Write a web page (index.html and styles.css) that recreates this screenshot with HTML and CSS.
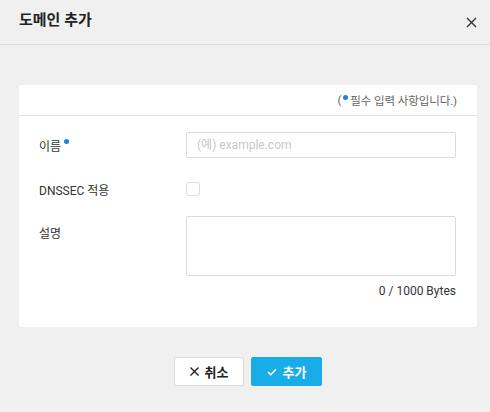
FILE: index.html
```html
<!DOCTYPE html>
<html lang="ko">
<head>
<meta charset="utf-8">
<link rel="stylesheet" href="styles.css">
</head>
<body>
<div class="dialog">
  <div class="dlg-header">
    <h1 class="dlg-title">도메인 추가</h1>
    <button class="dlg-close" aria-label="닫기">
      <svg width="11" height="11" viewBox="0 0 11 11"><path d="M1 1L10 10M10 1L1 10" stroke="#333" stroke-width="1.4" fill="none"/></svg>
    </button>
  </div>
  <div class="dlg-body">
    <div class="card">
      <div class="card-head">
        <span class="req-note">(<span class="dot"></span>필수 입력 사항입니다.)</span>
      </div>
      <div class="card-body">
        <div class="row row-name">
          <div class="label">이름<span class="dot dot-label"></span></div>
          <div class="field"><input class="text-input" type="text" placeholder="(예) example.com"></div>
        </div>
        <div class="row row-dnssec">
          <div class="label">DNSSEC 적용</div>
          <div class="field"><span class="checkbox"></span></div>
        </div>
        <div class="row row-desc">
          <div class="label label-top">설명</div>
          <div class="field">
            <textarea class="textarea"></textarea>
            <div class="bytes">0 / 1000 Bytes</div>
          </div>
        </div>
      </div>
    </div>
    <div class="actions">
      <button class="btn btn-cancel">
        <svg width="9" height="9" viewBox="0 0 9 9"><path d="M0.5 0.5L8.5 8.5M8.5 0.5L0.5 8.5" stroke="#222" stroke-width="1.4" fill="none"/></svg>
        취소
      </button>
      <button class="btn btn-ok">
        <svg width="10" height="8" viewBox="0 0 10 8"><path d="M1 4L3.8 6.7L9 1.2" stroke="#fff" stroke-width="1.6" fill="none"/></svg>
        추가
      </button>
    </div>
  </div>
</div>
</body>
</html>
```

FILE: styles.css
```css
* { box-sizing: border-box; }
html, body {
  margin: 0;
  padding: 0;
  background: #f0f0f0;
  font-family: Roboto, "Noto Sans CJK KR", sans-serif;
  color: #333;
}
.dialog {
  width: 490px;
  height: 412px;
  background: #f0f0f0;
}
.dlg-header {
  height: 45px;
  border-bottom: 1px solid #dcdcdc;
  display: flex;
  align-items: center;
  justify-content: space-between;
  padding: 0 13px 0 19px;
}
.dlg-title {
  margin: 0;
  margin-top: -7px;
  font-size: 15px;
  font-weight: 700;
  color: #222;
}
.dlg-close {
  border: 0;
  background: none;
  padding: 0;
  width: 11px;
  height: 11px;
  display: flex;
}
.dlg-body {
  padding: 40px 13px 0 19px;
}
.card {
  background: #fff;
  border-radius: 3px;
  height: 242px;
}
.card-head {
  height: 31px;
  border-bottom: 1px solid #e3e3e3;
  display: flex;
  align-items: center;
  justify-content: flex-end;
  padding: 0 20px 0 20px;
}
.req-note {
  font-size: 11.5px;
  letter-spacing: -0.1px;
  color: #666;
  display: flex;
  align-items: center;
}
.dot {
  display: inline-block;
  width: 5px;
  height: 5px;
  border-radius: 50%;
  background: #1b83e0;
}
.req-note .dot {
  margin: -5px 2px 0 2px;
}
.card-body {
  padding: 16px 21px 0 20px;
}
.row {
  display: flex;
}
.label {
  width: 147px;
  flex: none;
  font-size: 12px;
  color: #333;
  display: flex;
  align-items: center;
}
.dot-label {
  margin: -8px 0 0 3px;
}
.label-top {
  align-items: flex-start;
  padding-top: 8px;
}
.field {
  flex: 1;
  display: flex;
  flex-direction: column;
}
.row-name .field { height: 26px; }
.text-input {
  height: 26px;
  width: 100%;
  border: 1px solid #dcdcdc;
  border-radius: 2px;
  padding: 0 10px;
  font-family: Roboto, "Noto Sans CJK KR", sans-serif;
  font-size: 12px;
  color: #333;
  outline: none;
}
.text-input::placeholder { color: #c8c8c8; }
.row-dnssec { margin-top: 18px; height: 26px; }
.row-dnssec .field { justify-content: center; }
.checkbox {
  display: block;
  width: 14px;
  height: 14px;
  border: 1px solid #dcdcdc;
  border-radius: 3px;
  background: #fff;
}
.row-desc { margin-top: 14px; }
.textarea {
  display: block;
  width: 100%;
  height: 60px;
  border: 1px solid #dcdcdc;
  border-radius: 2px;
  resize: none;
  outline: none;
  margin: 0;
}
.bytes {
  text-align: right;
  font-size: 12px;
  color: #333;
  line-height: 14px;
  margin-top: 8px;
}
.actions {
  display: flex;
  justify-content: center;
  gap: 7px;
  margin-top: 30px;
}
.btn {
  height: 29px;
  width: 70px;
  border-radius: 2px;
  font-family: Roboto, "Noto Sans CJK KR", sans-serif;
  font-size: 13px;
  font-weight: 700;
  display: flex;
  align-items: center;
  justify-content: center;
  gap: 6px;
  padding: 0;
  cursor: pointer;
}
.btn-cancel {
  background: #fff;
  border: 1px solid #dcdcdc;
  color: #222;
}
.btn-ok {
  width: 71px;
  background: #18ace8;
  border: 1px solid #18ace8;
  color: #fff;
}
```
